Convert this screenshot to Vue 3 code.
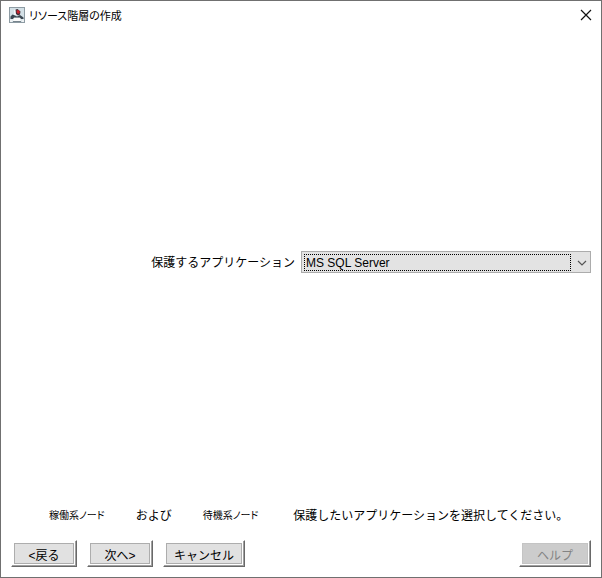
<script setup>
import { ref } from 'vue'

const application = ref('MS SQL Server')
const applications = ['MS SQL Server']
</script>

<template>
  <div class="dialog" role="dialog" aria-labelledby="dialog-title">
    <header class="titlebar">
      <svg class="logo" viewBox="0 0 16 16" aria-hidden="true">
        <rect x="0.5" y="0.5" width="15" height="15" fill="#d3e0e6" stroke="#8d9ba3" />
        <path d="M5 3 L7 2 L8 4 L7 8 L5 8 Z" fill="#f3f6f8" />
        <path d="M6.5 2.5 L8.5 2 L11.5 4.5 L11 7.5 L9 8.5 L7 7 Z" fill="#40303a" />
        <path d="M7.5 3.5 L9.5 3 L11 5 L10 6.8 L8 6.2 Z" fill="#c8232e" />
        <path d="M1.5 9.5 L3.5 7.5 L6 8.5 L8 9.5 L11 8 L14.5 10.5 V12 H12 L11 10.8 H5 L4 12 H1.5 Z" fill="#3c4852" />
        <path d="M5 10.8 H11 L12 14 H4 Z" fill="#fbfbfb" />
        <path d="M1 12.5 H4 L3 15 H1 Z M12.5 12.5 H15 V15 H13 Z" fill="#eef1f3" />
        <path d="M4 14.5 H12" stroke="#77848d" />
      </svg>
      <h1 id="dialog-title" class="title">リソース階層の作成</h1>
      <button class="close" type="button" aria-label="閉じる">
        <svg viewBox="0 0 12 12" aria-hidden="true">
          <path d="M1 1 L11 11 M11 1 L1 11" fill="none" stroke="#111" stroke-width="1.2" />
        </svg>
      </button>
    </header>

    <main class="body">
      <label class="label" for="application">保護するアプリケーション</label>
      <div class="combo">
        <select id="application" v-model="application">
          <option v-for="name in applications" :key="name">{{ name }}</option>
        </select>
        <span class="focus" aria-hidden="true"></span>
        <svg class="arrow" viewBox="0 0 10 6" aria-hidden="true">
          <path d="M1 1 L5 5 L9 1" fill="none" stroke="#555" stroke-width="1.2" />
        </svg>
      </div>
    </main>

    <div class="status">
      <span class="node">稼働系ノード</span>
      <span>および</span>
      <span class="node">待機系ノード</span>
      <span class="hint">保護したいアプリケーションを選択してください。</span>
    </div>

    <footer class="actions">
      <button class="btn" type="button"><span class="face">&lt;戻る</span></button>
      <button class="btn" type="button"><span class="face">次へ&gt;</span></button>
      <button class="btn wide" type="button"><span class="face">キャンセル</span></button>
      <button class="btn help" type="button" disabled><span class="face">ヘルプ</span></button>
    </footer>
  </div>
</template>

<style>
body {
  margin: 0;
}
</style>

<style scoped>
.dialog {
  box-sizing: border-box;
  min-height: 100vh;
  display: flex;
  flex-direction: column;
  border: 1px solid #707070;
  background: #fff;
  color: #000;
  font: 12px/16px "Liberation Sans", "Noto Sans CJK JP", sans-serif;
}

.titlebar {
  display: flex;
  align-items: center;
  height: 28px;
  padding: 0 8px;
}

.logo {
  width: 16px;
  height: 16px;
}

.title {
  flex: 1;
  margin: 0 0 0 4px;
  padding-top: 2px;
  font-size: 11px;
  font-weight: 400;
  font-feature-settings: "palt";
}

.close {
  display: flex;
  padding: 1px;
  border: 0;
  background: none;
}

.close svg {
  width: 12px;
  height: 12px;
}

.body {
  flex: 1;
  display: flex;
  align-items: center;
  justify-content: flex-end;
  gap: 6px;
  padding: 0 10px 0 16px;
}

.label {
  padding-top: 2px;
  white-space: nowrap;
}

.combo {
  position: relative;
  width: 290px;
  height: 22px;
}

.combo select {
  box-sizing: border-box;
  width: 100%;
  height: 100%;
  padding: 2px 24px 0 4px;
  border: 1px solid #acacac;
  border-radius: 0;
  outline: 0;
  appearance: none;
  background: #e3e3e3;
  color: #000;
  font: inherit;
}

.focus {
  position: absolute;
  inset: 3px 20px 2px 3px;
  border: 1px dotted #000;
  pointer-events: none;
}

.arrow {
  position: absolute;
  top: 9px;
  right: 4px;
  width: 10px;
  height: 6px;
  pointer-events: none;
}

.status {
  display: flex;
  align-items: center;
  gap: 31px;
  box-sizing: border-box;
  height: 44px;
  padding: 0 16px 0 48px;
  white-space: nowrap;
}

.node {
  font-size: 10px;
  font-feature-settings: "palt";
}

.hint {
  margin-left: 4px;
}

.actions {
  display: flex;
  gap: 10px;
  padding: 2px 10px 10px;
}

.btn {
  box-sizing: border-box;
  display: flex;
  width: 66px;
  height: 27px;
  padding: 1px;
  border: 1px solid;
  border-color: #fff #696969 #696969 #fff;
  box-shadow: inset -1px -1px #a0a0a0;
  background: #fff;
  color: #000;
  font: inherit;
}

.wide {
  width: 82px;
}

.help {
  width: 72px;
  margin-left: auto;
}

.face {
  box-sizing: border-box;
  flex: 1;
  margin: 1px;
  padding-top: 3px;
  border: 1px solid #adadad;
  background: #e1e1e1;
  line-height: 18px;
  text-align: center;
  white-space: nowrap;
}

.help .face {
  border-color: #c4c4c4;
  background: #ccc;
  color: #838383;
}
</style>
